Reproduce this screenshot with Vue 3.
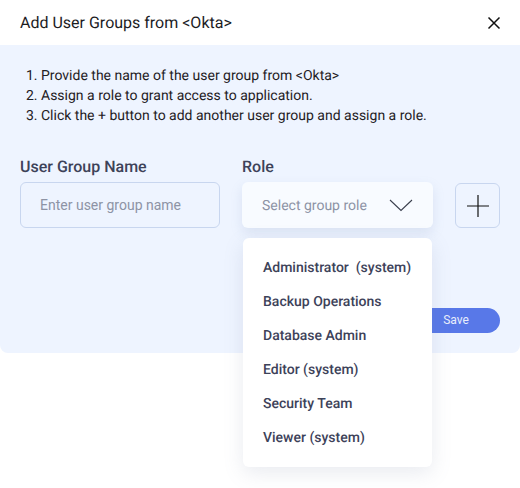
<script setup>
import { ref } from 'vue'

const steps = [
  'Provide the name of the user group from <Okta>',
  'Assign a role to grant access to application.',
  'Click the + button to add another user group and assign a role.',
]

const roles = [
  'Administrator  (system)',
  'Backup Operations',
  'Database Admin',
  'Editor (system)',
  'Security Team',
  'Viewer (system)',
]

const groupName = ref('')
</script>

<template>
  <div class="dialog">
    <header class="dialog-header">
      <h1>Add User Groups from &lt;Okta&gt;</h1>
      <button class="close" aria-label="Close">
        <svg width="14" height="14" viewBox="0 0 14 14">
          <path d="M1.5 1.5 L12.5 12.5 M12.5 1.5 L1.5 12.5" stroke="#111" stroke-width="1.5" fill="none" />
        </svg>
      </button>
    </header>

    <section class="dialog-body">
      <ol class="steps">
        <li v-for="step in steps" :key="step">{{ step }}</li>
      </ol>

      <div class="fields">
        <div class="field name-field">
          <label>User Group Name</label>
          <input v-model="groupName" placeholder="Enter user group name" />
        </div>

        <div class="field role-field">
          <label>Role</label>
          <div class="select">
            <span>Select group role</span>
            <svg width="24" height="13" viewBox="0 0 24 13">
              <path d="M1 1 L12 11.5 L23 1" stroke="#3a3f4d" stroke-width="1.1" fill="none" />
            </svg>
          </div>
          <ul class="menu">
            <li v-for="role in roles" :key="role">{{ role }}</li>
          </ul>
        </div>

        <button class="add" aria-label="Add">
          <svg width="22" height="22" viewBox="0 0 22 22">
            <path d="M0 11 H22 M11 0 V22" stroke="#111" stroke-width="1.2" fill="none" />
          </svg>
        </button>
      </div>

      <div class="actions">
        <button class="save">Save</button>
      </div>
    </section>
  </div>
</template>

<style>
html,
body {
  background: #fff;
}
</style>

<style scoped>
.dialog {
  width: 520px;
  height: 488px;
  font-family: Roboto, "Liberation Sans", sans-serif;
  text-rendering: geometricPrecision;
  overflow: hidden;
}

.dialog-header {
  height: 45px;
  display: flex;
  align-items: center;
  justify-content: space-between;
  padding: 0 20px;
  box-sizing: border-box;
}

.dialog-header h1 {
  margin: 0;
  font-size: 16px;
  font-weight: 400;
  color: #1c1c1f;
}

.close {
  padding: 0;
  border: none;
  background: none;
  display: flex;
  margin-right: -1px;
}

.dialog-body {
  height: 308px;
  box-sizing: border-box;
  background: #eef4ff;
  border-radius: 0 0 8px 8px;
  padding: 21px 20px 20px;
  display: flex;
  flex-direction: column;
}

.steps {
  margin: 0;
  padding: 0 0 0 21px;
  font-size: 14px;
  line-height: 20px;
  color: #1f2024;
}

.fields {
  margin-top: 31px;
  display: flex;
  align-items: flex-start;
}

.field label {
  display: block;
  font-size: 16px;
  font-weight: 500;
  line-height: 20px;
  color: #3d4259;
  margin-bottom: 5px;
}

.name-field {
  width: 200px;
  margin-right: 22px;
}

.name-field input {
  width: 100%;
  height: 46px;
  box-sizing: border-box;
  border: 1px solid #c8d6ef;
  border-radius: 6px;
  background: transparent;
  padding: 0 19px;
  font-family: inherit;
  font-size: 14px;
  outline: none;
}

.name-field input::placeholder {
  color: #8d93a5;
  opacity: 1;
}

.role-field {
  width: 191px;
  position: relative;
  margin-right: 22px;
}

.select {
  height: 46px;
  box-sizing: border-box;
  background: #f8fbff;
  border-radius: 6px;
  box-shadow: 0 5px 12px rgba(130, 150, 190, 0.18);
  padding: 2px 20px 0;
  display: flex;
  align-items: center;
  justify-content: space-between;
  font-size: 14px;
  color: #8d93a5;
}

.select svg {
  margin-top: -2px;
}

.menu {
  position: absolute;
  top: 81px;
  left: 1px;
  width: 189px;
  height: 229px;
  box-sizing: border-box;
  margin: 0;
  padding: 13px 0 0;
  list-style: none;
  background: #fff;
  border-radius: 6px;
  box-shadow: 0 6px 20px rgba(120, 130, 160, 0.16);
  z-index: 2;
}

.menu li {
  height: 34px;
  line-height: 34px;
  padding-left: 20px;
  font-size: 14px;
  font-weight: 500;
  color: #3d4259;
  white-space: pre;
}

.add {
  margin-top: 26px;
  width: 45px;
  height: 45px;
  padding: 0;
  border: 1px solid #c8d6ef;
  border-radius: 6px;
  background: transparent;
  display: flex;
  align-items: center;
  justify-content: center;
}

.actions {
  margin-top: auto;
  display: flex;
  justify-content: flex-end;
}

.save {
  width: 110px;
  height: 25px;
  padding: 0 0 2px 22px;
  border: none;
  border-radius: 13px;
  background: #5878e8;
  color: #e8eefc;
  font-family: inherit;
  font-size: 12px;
  text-align: center;
}
</style>
